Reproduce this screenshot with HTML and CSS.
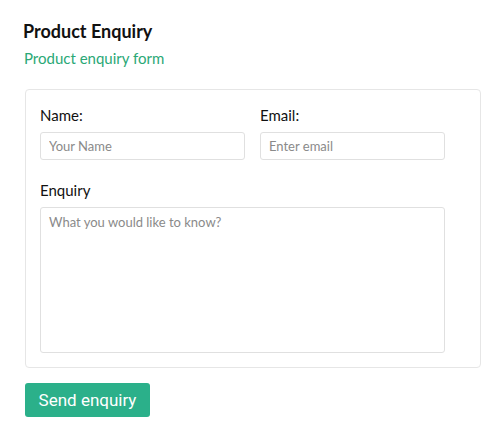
FILE: index.html
```html
<!DOCTYPE html>
<html lang="en">
<head>
<meta charset="utf-8">
<title>Product Enquiry</title>
<link rel="stylesheet" href="styles.css">
</head>
<body>
<main class="page">
  <h1 class="title">Product Enquiry</h1>
  <p class="subtitle">Product enquiry form</p>
  <form class="card">
    <div class="row">
      <div class="field field-name">
        <label class="label" for="name">Name:</label>
        <input class="input" id="name" type="text" placeholder="Your Name">
      </div>
      <div class="field field-email">
        <label class="label" for="email">Email:</label>
        <input class="input" id="email" type="email" placeholder="Enter email">
      </div>
    </div>
    <div class="field field-enquiry">
      <label class="label" for="enquiry">Enquiry</label>
      <textarea class="textarea" id="enquiry" placeholder="What you would like to know?"></textarea>
    </div>
  </form>
  <button class="btn" type="button">Send enquiry</button>
</main>
</body>
</html>
```
FILE: styles.css
```css
* { box-sizing: border-box; }
html, body { margin: 0; padding: 0; background: #fff; }
body {
  font-family: Lato, "Liberation Sans", sans-serif;
  color: #111;
}
.page {
  padding: 20px 19px 0 24px;
}
.title {
  margin: 0 0 0 -1px;
  font-size: 18px;
  line-height: 22px;
  font-weight: 700;
  color: #111;
}
.subtitle {
  margin: 6px 0 0 0;
  font-size: 15px;
  line-height: 20px;
  color: #2aa876;
}
.card {
  margin: 21px 0 0 1px;
  width: 456px;
  border: 1px solid #e6e6e6;
  border-radius: 4px;
  padding: 15px 14px 14px 14px;
}
.row {
  display: flex;
  gap: 15px;
}
.field {
  display: flex;
  flex-direction: column;
  gap: 7px;
}
.field-name { width: 205px; }
.field-email { width: 185px; }
.field-enquiry { margin-top: 20px; width: 405px; }
.label {
  font-size: 15px;
  line-height: 20px;
  color: #111;
}
.input, .textarea {
  font-family: Lato, "Liberation Sans", sans-serif;
  font-size: 13px;
  color: #333;
  border: 1px solid #e0e0e0;
  border-radius: 3px;
  background: #fff;
  outline: none;
  margin: 0;
}
.input {
  height: 28px;
  padding: 0 8px;
}
.textarea {
  height: 146px;
  padding: 6px 8px;
  resize: none;
  line-height: 16px;
}
.input::placeholder, .textarea::placeholder { color: #8a8a8a; opacity: 1; }
.btn {
  margin: 15px 0 0 1px;
  width: 125px;
  height: 34px;
  border: 0;
  border-radius: 3px;
  background: #2bb08a;
  color: #fff;
  font-family: Roboto, "Liberation Sans", sans-serif;
  font-size: 17px;
  padding: 0;
  cursor: pointer;
}
```
